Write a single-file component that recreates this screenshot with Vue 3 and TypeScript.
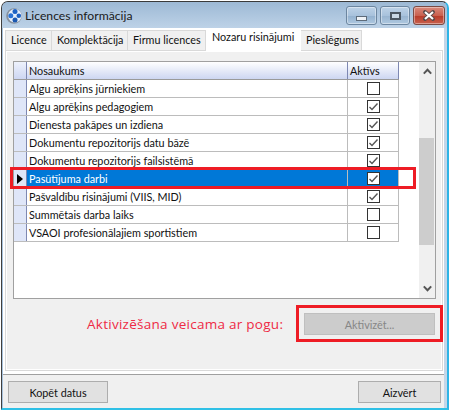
<script setup lang="ts">
interface Row { name: string; active: boolean; selected?: boolean }
const rows: Row[] = [
  { name: 'Algu aprēķins jūrniekiem', active: false },
  { name: 'Algu aprēķins pedagogiem', active: true },
  { name: 'Dienesta pakāpes un izdiena', active: true },
  { name: 'Dokumentu repozitorijs datu bāzē', active: true },
  { name: 'Dokumentu repozitorijs failsistēmā', active: true },
  { name: 'Pasūtījuma darbi', active: true, selected: true },
  { name: 'Pašvaldību risinājumi (VIIS, MID)', active: true },
  { name: 'Summētais darba laiks', active: false },
  { name: 'VSAOI profesionālajiem sportistiem', active: false },
]
const tabs = ['Licence', 'Komplektācija', 'Firmu licences', 'Nozaru risinājumi', 'Pieslēgums']
</script>

<template>
  <div class="page">
    <div class="window">
      <header class="titlebar">
        <svg class="app-icon" width="16" height="16" viewBox="0 0 16 16">
          <circle cx="8" cy="8" r="7.8" fill="#87919e" />
          <circle cx="8.8" cy="7.8" r="6.8" fill="#e8f0fa" />
          <circle cx="9" cy="3.6" r="2.5" fill="#1d62c4" />
          <circle cx="4.8" cy="7.8" r="2.5" fill="#2a73d6" />
          <circle cx="12.8" cy="7.8" r="2.3" fill="#1d62c4" />
          <circle cx="9" cy="12" r="2.5" fill="#1b58b0" />
        </svg>
        <span class="title">Licences informācija</span>
        <div class="controls">
          <div class="ctl min"><span class="min-glyph"></span></div>
          <div class="ctl max"><span class="max-glyph"></span></div>
          <div class="ctl close">
            <svg width="14" height="11" viewBox="0 0 14 11">
              <path d="M3 2 L11 9 M11 2 L3 9" stroke="#5a4a4a" stroke-width="3.8" stroke-linecap="round" />
              <path d="M3 2 L11 9 M11 2 L3 9" stroke="#fff" stroke-width="2.2" />
            </svg>
          </div>
        </div>
      </header>

      <div class="client">
        <nav class="tabs">
          <div v-for="t in tabs" :key="t" class="tab" :class="{ on: t === 'Nozaru risinājumi' }">{{ t }}</div>
        </nav>

        <section class="panel">
          <div class="grid">
            <div class="table">
              <div class="row head">
                <div class="rh"></div>
                <div class="c1">Nosaukums</div>
                <div class="c2">Aktīvs</div>
              </div>
              <div v-for="r in rows" :key="r.name" class="row" :class="{ sel: r.selected }">
                <div class="rh"><span v-if="r.selected" class="arrow"></span></div>
                <div class="c1">{{ r.name }}</div>
                <div class="c2 chk">
                  <span class="box">
                    <svg v-if="r.active" width="11" height="11" viewBox="0 0 11 11">
                      <path d="M1.5 6 L4 8.5 L9.5 2.5" fill="none" stroke="#555" stroke-width="1.4" />
                    </svg>
                  </span>
                </div>
              </div>
            </div>
            <div class="scroll">
              <svg class="sb-arrow" width="9" height="7" viewBox="0 0 9 7"><path d="M0.8 5.6 L4.5 1.8 L8.2 5.6" fill="none" stroke="#555" stroke-width="2" /></svg>
              <div class="thumb"></div>
              <svg class="sb-arrow down" width="9" height="7" viewBox="0 0 9 7"><path d="M0.8 1.4 L4.5 5.2 L8.2 1.4" fill="none" stroke="#555" stroke-width="2" /></svg>
            </div>
          </div>

          <div class="action">
            <span class="hint">Aktivizēšana veicama ar pogu:</span>
            <button class="btn disabled" disabled>Aktivizēt...</button>
          </div>
        </section>

        <footer class="footer">
          <button class="btn copy">Kopēt datus</button>
          <button class="btn closebtn">Aizvērt</button>
        </footer>
      </div>

      <div class="mark mark-row"></div>
      <div class="mark mark-btn"></div>
    </div>
  </div>
</template>

<style scoped>
.page {
  width: 451px;
  height: 411px;
  box-sizing: border-box;
  padding: 1px;
  background: #fff;
  overflow: hidden;
  font-family: Lato, Roboto, sans-serif;
  font-size: 10.8px;
  color: #111;
}
.window {
  position: relative;
  width: 448px;
  height: 409px;
  box-sizing: border-box;
  border-top: 1px solid #3a3a3a;
  border-left: 1px solid #3f3f3f;
  border-right: 2px solid #2eb4e6;
  border-bottom: 2px solid #2fc0e6;
  border-radius: 7px 7px 0 0;
  background: #a9c3dd;
  display: flex;
  flex-direction: column;
}
.titlebar {
  height: 25px;
  display: flex;
  align-items: center;
  padding: 1px 0 0 4px;
  background: linear-gradient(#9db9d5, #bdd2e7);
  border-radius: 6px 6px 0 0;
  flex: none;
}
.app-icon { flex: none; }
.title {
  margin-left: 3px;
  font-size: 12.2px;
  color: #1a1a1a;
}
.controls {
  margin-left: auto;
  margin-right: 2px;
  display: flex;
  gap: 3px;
  align-self: flex-start;
  margin-top: 3px;
}
.ctl {
  box-sizing: border-box;
  height: 19px;
  border: 1px solid #6c86a0;
  border-radius: 3px;
  display: flex;
  align-items: center;
  justify-content: center;
  box-shadow: inset 0 0 0 1px rgba(255,255,255,.4);
}
.min { width: 31px; background: linear-gradient(#bdd2e7, #a8c2dc 50%, #93b1cf 52%, #aec8e0); align-items: flex-end; padding-bottom: 3px; }
.max { width: 30px; background: linear-gradient(#bdd2e7, #a8c2dc 50%, #98b4d0 52%, #aec8e0); }
.close { width: 32px; background: linear-gradient(#d98a7c, #c9604f 50%, #b83a28 52%, #c8614e); border-color: #7a4a44; }
.min-glyph { width: 11px; height: 5px; box-sizing: border-box; background: #eef2f6; border: 1px solid #5d6b7a; }
.max-glyph { width: 11px; height: 8px; box-sizing: border-box; background: #c9d8e6; border: 2px solid #4a5662; }

.client {
  flex: 1;
  min-height: 0;
  margin: 0 0 0 1px;
  background: #fff;
  border-right: 3px solid #c4d6e8;
  display: flex;
  flex-direction: column;
  min-width: 0;
}
.tabs {
  height: 22px;
  display: flex;
  align-items: flex-end;
  padding-left: 2px;
  flex: none;
  background: #fff;
  position: relative;
  z-index: 1;
}
.tab {
  box-sizing: border-box;
  height: 20px;
  padding-left: 5px;
  line-height: 18px;
  background: #f0f0f0;
  border: 1px solid #d9d9d9;
  border-left: 0;
  border-bottom: 0;
  color: #111;
  white-space: nowrap;
}
.tab:nth-child(1) { width: 47px; border-left: 1px solid #d9d9d9; }
.tab:nth-child(2) { width: 76px; }
.tab:nth-child(3) { width: 78px; }
.tab:nth-child(5) { width: 61px; }
.tab.on {
  width: 95px;
  height: 24px;
  margin-bottom: -2px;
  padding: 0 0 4px 6px;
  line-height: 18px;
  background: #fff;
  border: 0;
}
.panel {
  box-sizing: border-box;
  height: 321px;
  margin: 0 0 0 2px;
  width: 438px;
  flex: none;
  background: #f0f0f0;
  border: 2px solid #fff;
  outline: 1px solid #d9d9d9;
  outline-offset: -1px;
  padding: 9px 6px 0 6px;
}
.grid {
  box-sizing: border-box;
  width: 423px;
  height: 238px;
  background: #fff;
  border: 1px solid #a0a0a0;
  display: flex;
  justify-content: space-between;
}
.table { width: 385px; }
.row {
  display: grid;
  grid-template-columns: 13px 320px 52px;
  height: 18px;
  box-sizing: border-box;
  border-bottom: 1px solid #bcbcbc;
  line-height: 17px;
}
.rh {
  background: #dfe6f8;
  border-right: 1px solid #7e88b2;
  display: flex;
  align-items: center;
  justify-content: center;
  box-sizing: border-box;
}
.c1 {
  padding-left: 2px;
  white-space: nowrap;
  overflow: hidden;
}
.c2 {
  padding-left: 2px;
  border-left: 1px solid #bcbcbc;
  border-right: 1px solid #bcbcbc;
  box-sizing: border-box;
}
.head { background: linear-gradient(#fff, #cdd6f2); border-bottom-color: #9a9a9a; }
.head .rh { background: linear-gradient(#eef2fc, #cdd6f2); }
.head .c2 { border-left: 1px solid #7e88b2; border-right: 1px solid #7e88b2; }
.chk { display: flex; justify-content: center; align-items: center; padding-left: 0; }
.box {
  box-sizing: border-box;
  width: 13px;
  height: 13px;
  background: #fff;
  border: 1px solid #333;
  display: flex;
  align-items: center;
  justify-content: center;
}
.sel .c1, .sel .c2 { background: #0078d7; color: #fff; }
.arrow {
  width: 0;
  height: 0;
  border-top: 5px solid transparent;
  border-bottom: 5px solid transparent;
  border-left: 6px solid #000;
}
.scroll {
  position: relative;
  width: 16px;
  background: #f0f0f0;
  display: flex;
  flex-direction: column;
  align-items: center;
  flex: none;
}
.sb-arrow { margin-top: 6px; flex: none; }
.sb-arrow.down { margin-top: 0; position: absolute; bottom: 6px; }
.thumb {
  width: 15px;
  height: 107px;
  margin-top: 63px;
  background: #cdcdcd;
  margin-right: 1px;
}
.action {
  display: flex;
  align-items: center;
  margin-top: 14px;
  padding-left: 74px;
}
.hint {
  width: 217px;
  font-family: "Open Sans", "Noto Sans", sans-serif;
  font-size: 13.5px;
  letter-spacing: 0.27px;
  color: #ee2a45;
  white-space: nowrap;
}
.btn {
  box-sizing: border-box;
  height: 22px;
  font-family: inherit;
  font-size: 10.8px;
  background: #e1e1e1;
  border: 1px solid #adadad;
  color: #111;
  padding: 0;
}
.btn.disabled {
  width: 131px;
  background: #cccccc;
  border-color: #bfbfbf;
  color: #868686;
}
.footer {
  flex: 1;
  background: #f0f0f0;
  border-top: 1px solid #a0a0a0;
  margin-top: 3px;
  display: flex;
  justify-content: space-between;
  align-items: flex-start;
  padding: 6px 3px 0 5px;
}
.copy { width: 100px; }
.closebtn { width: 83px; }
.mark { position: absolute; border: 3px solid #ee1c25; box-sizing: border-box; pointer-events: none; z-index: 2; }
.mark-row { left: 8px; top: 165px; width: 406px; height: 22px; }
.mark-btn { left: 294px; top: 303px; width: 147px; height: 37px; }
</style>
